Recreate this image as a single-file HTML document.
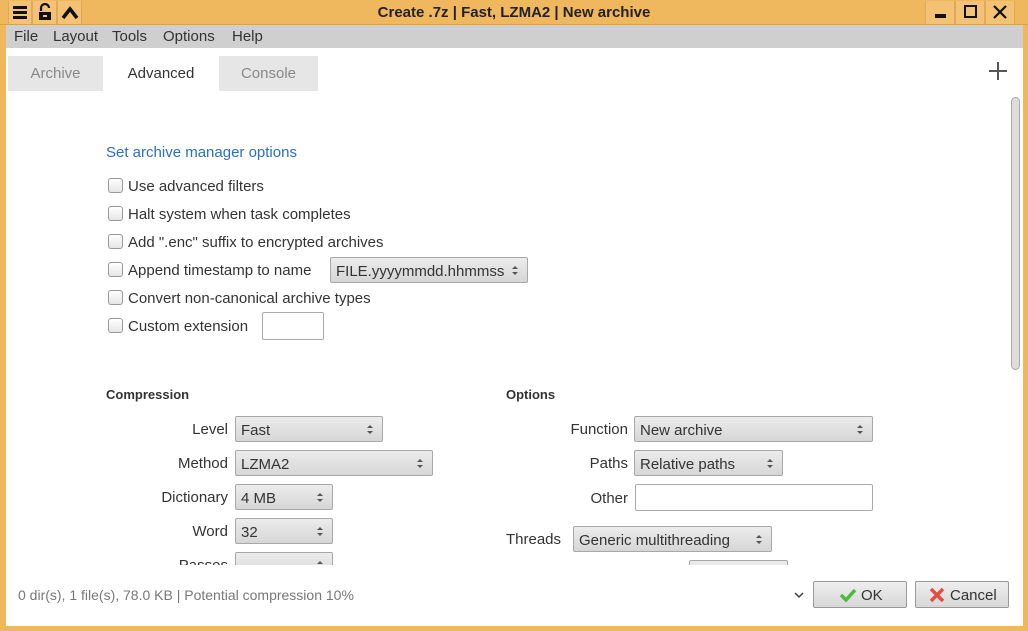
<!DOCTYPE html><html><head><style>
*{box-sizing:border-box;margin:0;padding:0}
body{width:1028px;height:631px;background:#f0b85e;font-family:"Liberation Sans","DejaVu Sans",sans-serif;font-size:14px;color:#333;position:relative;overflow:hidden}
.a{position:absolute;white-space:nowrap}
.cb{position:absolute;width:15px;height:15px;border:1px solid #999;border-radius:3px;background:linear-gradient(#fff,#e6e6e6)}
.sel{position:absolute;height:26px;border:1px solid #a8a8a8;border-radius:2px;background:linear-gradient(#ececec,#d6d6d6);padding:5px 5px 0;color:#333}
.sel:after{content:"";position:absolute;right:9px;top:8px;width:0;height:0;border-left:3px solid transparent;border-right:3px solid transparent;border-bottom:3px solid #555}
.sel:before{content:"";position:absolute;right:9px;top:14px;width:0;height:0;border-left:3px solid transparent;border-right:3px solid transparent;border-top:3px solid #555}
.inp{position:absolute;height:27px;border:1px solid #aaa;border-radius:2px;background:#fff}
.lbl{position:absolute;text-align:right;white-space:nowrap}
.btn{position:absolute;height:27px;border:1px solid #999;border-radius:2px;background:linear-gradient(#eee,#d8d8d8);font-size:15px;padding-top:4px}
.tb{position:absolute;top:1px;height:23px;background:#f3c275;border-left:1px solid #e0a85a;border-right:1px solid #e0a85a}
</style></head><body>
<div class="a" style="left:0;top:0;width:1028px;height:25px;background:#f0b85e;border-bottom:1px solid #d9a24c"></div>
<div class="tb" style="left:8px;width:24px"><div style="position:absolute;left:4px;top:5px;width:14px;height:3px;background:#111;box-shadow:0 5px 0 #111,0 10px 0 #111"></div></div>
<div class="tb" style="left:32px;width:25px"><svg width="24" height="23"><path d="M8 10V7a4 4 0 0 1 8 0" fill="none" stroke="#111" stroke-width="2.2"/><rect x="6" y="11" width="12" height="8" fill="#111"/><rect x="10" y="14" width="4" height="2" fill="#f3c275"/></svg></div>
<div class="tb" style="left:57px;width:25px"><svg width="24" height="23"><path d="M5 17 L12 8 L19 17" fill="none" stroke="#111" stroke-width="3.5"/></svg></div>
<div class="a" style="left:0;top:4px;width:1028px;text-align:center;font-weight:bold;font-size:15px;color:#222">Create .7z | Fast, LZMA2 | New archive</div>
<div class="tb" style="left:925px;width:30px"><div style="position:absolute;left:9px;top:13px;width:11px;height:4px;background:#111"></div></div>
<div class="tb" style="left:955px;width:30px"><div style="position:absolute;left:8px;top:4px;width:13px;height:13px;border:2px solid #111"></div></div>
<div class="tb" style="left:985px;width:30px"><svg width="28" height="23"><path d="M8 5L20 17M20 5L8 17" stroke="#111" stroke-width="2.2"/></svg></div>
<div class="a" style="left:6px;top:25px;width:1017px;height:23px;background:#cfcfcf"></div>
<div class="a" style="left:14px;top:28px;font-size:15px">File</div>
<div class="a" style="left:53px;top:28px;font-size:15px">Layout</div>
<div class="a" style="left:112px;top:28px;font-size:15px">Tools</div>
<div class="a" style="left:163px;top:28px;font-size:15px">Options</div>
<div class="a" style="left:232px;top:28px;font-size:15px">Help</div>
<div class="a" style="left:6px;top:48px;width:1017px;height:578px;background:#fff"></div>
<div class="a" style="left:8px;top:56px;width:95px;height:35px;background:#e6e6e6;color:#888;text-align:center;padding-top:9px;font-size:15px">Archive</div>
<div class="a" style="left:103px;top:56px;width:116px;height:35px;color:#333;text-align:center;padding-top:9px;font-size:15px">Advanced</div>
<div class="a" style="left:219px;top:56px;width:99px;height:35px;background:#e6e6e6;color:#888;text-align:center;padding-top:9px;font-size:15px">Console</div>
<svg class="a" style="left:987px;top:60px" width="22" height="22"><path d="M11 2V20M2 11H20" stroke="#555" stroke-width="2"/></svg>
<div class="a" style="left:1011px;top:97px;width:9px;height:273px;border:1px solid #aaa;border-radius:5px;background:#ddd"></div>
<div class="a" style="left:106px;top:144px;color:#2a6fc0;font-size:15px">Set archive manager options</div>
<div class="cb" style="left:108px;top:178px"></div><div class="a" style="left:128px;top:178px;font-size:15px">Use advanced filters</div>
<div class="cb" style="left:108px;top:206px"></div><div class="a" style="left:128px;top:206px;font-size:15px">Halt system when task completes</div>
<div class="cb" style="left:108px;top:234px"></div><div class="a" style="left:128px;top:234px;font-size:15px">Add ".enc" suffix to encrypted archives</div>
<div class="cb" style="left:108px;top:262px"></div><div class="a" style="left:128px;top:262px;font-size:15px">Append timestamp to name</div>
<div class="sel" style="left:330px;top:257px;width:198px;font-size:15px">FILE.yyyymmdd.hhmmss</div>
<div class="cb" style="left:108px;top:290px"></div><div class="a" style="left:128px;top:290px;font-size:15px">Convert non-canonical archive types</div>
<div class="cb" style="left:108px;top:318px"></div><div class="a" style="left:128px;top:318px;font-size:15px">Custom extension</div>
<div class="inp" style="left:262px;top:312px;width:62px;height:28px"></div>
<div style="position:absolute;left:6px;top:380px;width:1000px;height:185px;overflow:hidden">
<div class="a" style="left:100px;top:7px;font-weight:bold;font-size:13px">Compression</div>
<div class="a" style="left:500px;top:7px;font-weight:bold;font-size:13px">Options</div>
<div class="lbl" style="right:778px;top:41px;font-size:15px">Level</div><div class="sel" style="left:229px;top:36px;width:148px;font-size:15px">Fast</div>
<div class="lbl" style="right:778px;top:75px;font-size:15px">Method</div><div class="sel" style="left:229px;top:70px;width:198px;font-size:15px">LZMA2</div>
<div class="lbl" style="right:778px;top:109px;font-size:15px">Dictionary</div><div class="sel" style="left:229px;top:104px;width:98px;font-size:15px">4 MB</div>
<div class="lbl" style="right:778px;top:143px;font-size:15px">Word</div><div class="sel" style="left:229px;top:138px;width:98px;font-size:15px">32</div>
<div class="lbl" style="right:778px;top:177px;font-size:15px">Passes</div><div class="sel" style="left:229px;top:172px;width:98px"></div>
<div class="lbl" style="right:378px;top:41px;font-size:15px">Function</div><div class="sel" style="left:628px;top:36px;width:239px;font-size:15px">New archive</div>
<div class="lbl" style="right:378px;top:75px;font-size:15px">Paths</div><div class="sel" style="left:628px;top:70px;width:149px;font-size:15px">Relative paths</div>
<div class="lbl" style="right:378px;top:110px;font-size:15px">Other</div><div class="inp" style="left:629px;top:104px;width:238px"></div>
<div class="a" style="left:500px;top:151px;font-size:15px">Threads</div><div class="sel" style="left:567px;top:146px;width:199px;font-size:15px">Generic multithreading</div>
<div class="sel" style="left:683px;top:180px;width:99px"></div>
</div>
<div class="a" style="left:18px;top:587px;color:#777;font-size:14px">0 dir(s), 1 file(s), 78.0 KB | Potential compression 10%</div>
<svg class="a" style="left:793px;top:590px" width="12" height="10"><path d="M2 3L6 7L10 3" fill="none" stroke="#444" stroke-width="1.5"/></svg>
<div class="btn" style="left:813px;top:581px;width:94px"><svg style="position:absolute;left:25px;top:5px" width="18" height="16"><path d="M2 8L7 13L16 3" fill="none" stroke="#4cbb3c" stroke-width="3.5"/></svg><span style="position:absolute;left:47px;top:5px">OK</span></div>
<div class="btn" style="left:915px;top:581px;width:94px"><svg style="position:absolute;left:12px;top:4px" width="18" height="18"><path d="M3 3L15 15M15 3L3 15" stroke="#e0503c" stroke-width="3.5"/></svg><span style="position:absolute;left:34px;top:5px">Cancel</span></div>
</body></html>
